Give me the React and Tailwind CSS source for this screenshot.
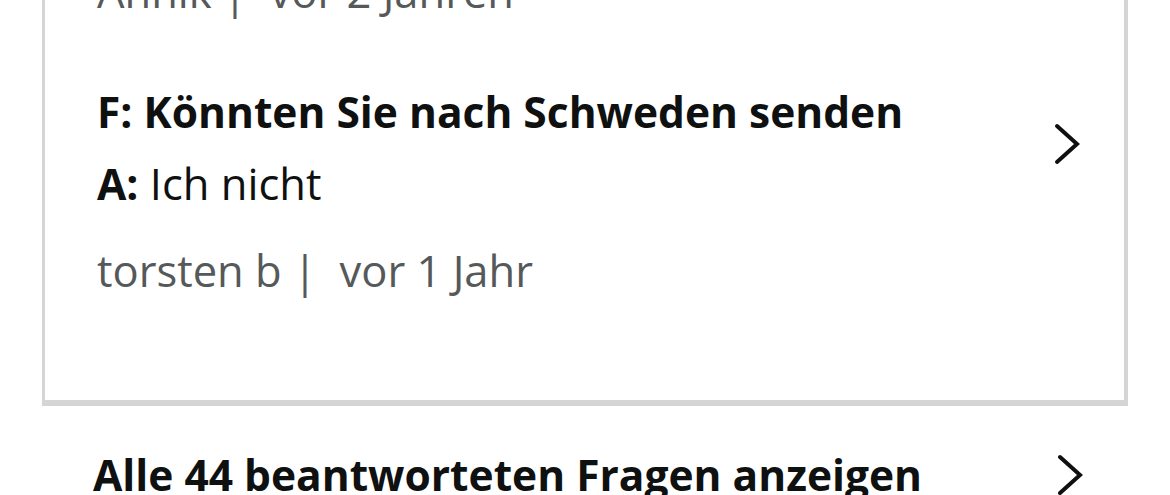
import React from 'react';

const Chevron = ({ className = '' }) => (
    <svg width="26" height="42" viewBox="0 0 26 42" fill="none" className={className}>
        <polyline points="3,3 23,21 3,39" stroke="#0f1111" strokeWidth="4" strokeLinecap="round" strokeLinejoin="miter" />
    </svg>
);

const App = () => {
    return (
        <div className="w-[1170px] h-[495px] overflow-hidden bg-white font-['Open_Sans',sans-serif] text-[#0f1111]">
            {/* Q&A card, scrolled so its top is out of view */}
            <div className="mx-[42px] -mt-[44px] border-l-[3px] border-r-[4px] border-b-[6px] border-[#d5d5d5] pl-[52px] pr-[44px] pb-[93px]">
                <p className="text-[43.5px] leading-[72px] text-[#565959]">Annik |&nbsp; vor 2 Jahren</p>

                <div className="mt-[48px] flex items-center justify-between">
                    <div>
                        <p className="text-[42.5px] leading-[72px] font-bold">F: Könnten Sie nach Schweden senden</p>
                        <p className="text-[43.5px] leading-[72px]"><span className="font-bold text-[42.5px]">A:</span> Ich nicht</p>
                    </div>
                    <Chevron className="-mt-[8px]" />
                </div>

                <p className="mt-[15px] text-[43.5px] leading-[72px] text-[#565959]">torsten b |&nbsp; vor 1 Jahr</p>
            </div>

            {/* See all link */}
            <div className="mt-[33px] pl-[93px] pr-[87px] flex items-center justify-between">
                <p className="text-[42.5px] leading-[72px] font-bold">Alle 44 beantworteten Fragen anzeigen</p>
                <Chevron />
            </div>
        </div>
    );
};

export default App;
